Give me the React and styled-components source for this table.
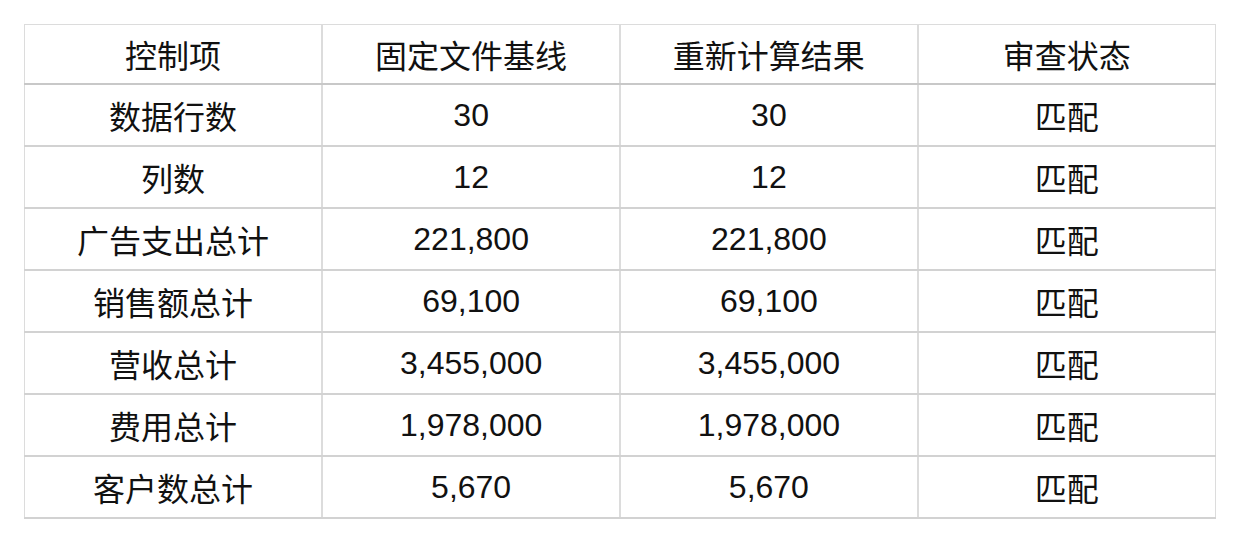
import styled, { createGlobalStyle } from 'styled-components';

const GlobalStyle = createGlobalStyle`
  html, body {
    margin: 0;
    padding: 0;
    background: #ffffff;
  }
  body {
    font-family: "Liberation Sans", "Noto Sans CJK SC", sans-serif;
    color: #111;
  }
`;

const rows = [
  ['数据行数', '30', '30', '匹配'],
  ['列数', '12', '12', '匹配'],
  ['广告支出总计', '221,800', '221,800', '匹配'],
  ['销售额总计', '69,100', '69,100', '匹配'],
  ['营收总计', '3,455,000', '3,455,000', '匹配'],
  ['费用总计', '1,978,000', '1,978,000', '匹配'],
  ['客户数总计', '5,670', '5,670', '匹配'],
];

const headers = ['控制项', '固定文件基线', '重新计算结果', '审查状态'];

const Page = styled.div`
  padding: 24px 24px 0 24px;
`;

const Table = styled.table`
  width: 1192px;
  border-collapse: collapse;
  table-layout: fixed;
  border: 1px solid #dcdcdc;
`;

const HeadCell = styled.th`
  height: 58px;
  padding: 0;
  font-weight: 400;
  font-size: 32px;
  text-align: center;
  border-left: 2px solid #dcdcdc;
  border-bottom: 2px solid #c8c8c8;
  &:first-child {
    border-left: 1px solid #dcdcdc;
  }
`;

const Cell = styled.td`
  height: 60px;
  padding: 0;
  font-size: 32px;
  text-align: center;
  border-left: 2px solid #dcdcdc;
  border-bottom: 2px solid #d2d2d2;
  &:first-child {
    border-left: 1px solid #dcdcdc;
  }
`;

export default function App() {
  return (
    <Page>
      <GlobalStyle />
      <Table>
        <thead>
          <tr>
            {headers.map((h) => (
              <HeadCell key={h}>{h}</HeadCell>
            ))}
          </tr>
        </thead>
        <tbody>
          {rows.map((r) => (
            <tr key={r[0]}>
              {r.map((c, i) => (
                <Cell key={i}>{c}</Cell>
              ))}
            </tr>
          ))}
        </tbody>
      </Table>
    </Page>
  );
}
